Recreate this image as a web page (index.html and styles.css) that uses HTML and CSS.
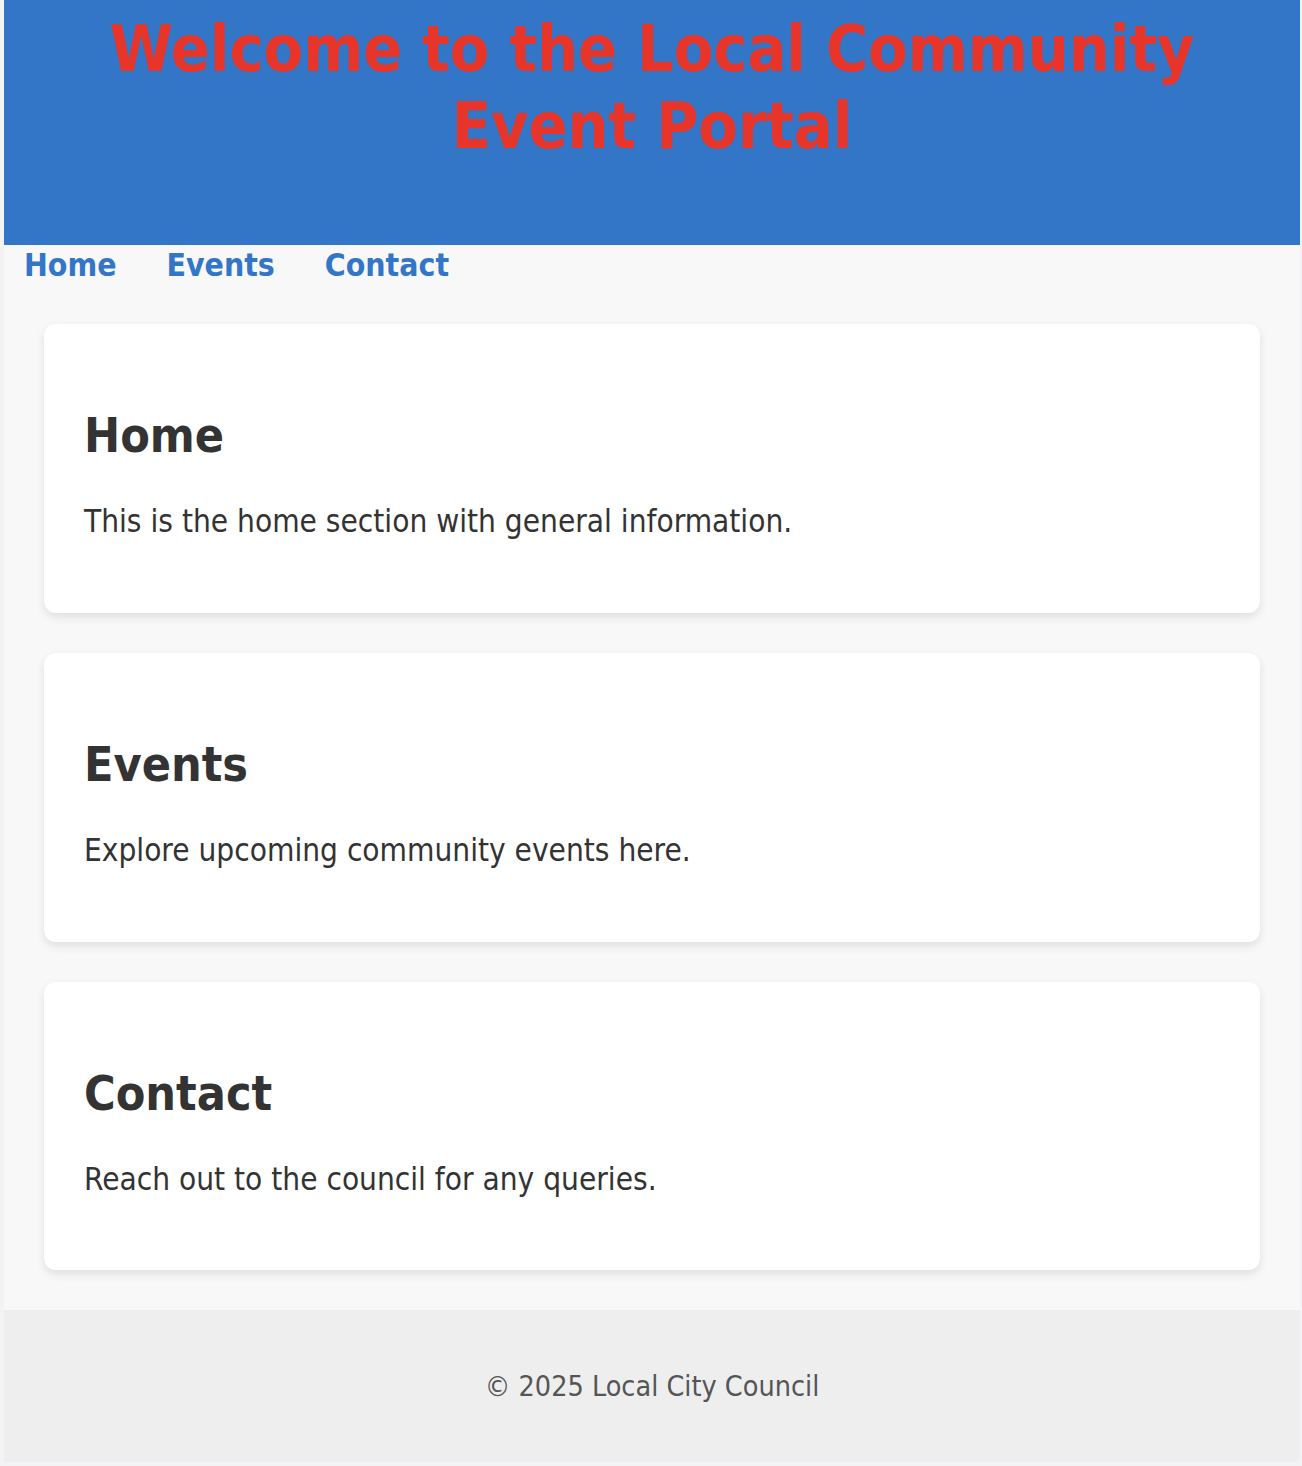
FILE: index.html
```html
<!DOCTYPE html>
<html lang="en">
<head>
<meta charset="utf-8">
<title>Local Community Event Portal</title>
<link rel="stylesheet" href="styles.css">
</head>
<body>
<div class="page">
  <header class="site-header">
    <h1 class="site-title">Welcome to the Local Community Event Portal</h1>
  </header>
  <nav class="site-nav">
    <a class="nav-link" href="#home">Home</a>
    <a class="nav-link" href="#events">Events</a>
    <a class="nav-link" href="#contact">Contact</a>
  </nav>
  <main class="content">
    <section class="card" id="home">
      <h2 class="card-title">Home</h2>
      <p class="card-text">This is the home section with general information.</p>
    </section>
    <section class="card" id="events">
      <h2 class="card-title">Events</h2>
      <p class="card-text">Explore upcoming community events here.</p>
    </section>
    <section class="card" id="contact">
      <h2 class="card-title">Contact</h2>
      <p class="card-text">Reach out to the council for any queries.</p>
    </section>
  </main>
  <footer class="site-footer">
    <p class="footer-text">© 2025 Local City Council</p>
  </footer>
</div>
</body>
</html>
```
FILE: styles.css
```css
html, body {
  margin: 0;
  padding: 0;
}
body {
  background: #f3f3f6;
  font-family: "DejaVu Sans Condensed", "DejaVu Sans", sans-serif;
  font-stretch: condensed;
  color: #333333;
  line-height: 1.207;
  padding: 0 2px 4px 4px;
}
.page {
  background: #f8f8f8;
  border-bottom-right-radius: 6px;
  overflow: hidden;
}
.site-header {
  background: #3375c6;
  padding: 11px 20px 0;
  height: 245px;
  box-sizing: border-box;
}
.site-title {
  margin: 0;
  color: #e8352a;
  font-size: 64px;
  font-weight: bold;
  text-align: center;
}
.site-nav {
  display: flex;
  gap: 50px;
  padding: 1px 20px 0;
}
.nav-link {
  color: #3375c6;
  font-size: 31.7px;
  font-weight: bold;
  text-decoration: none;
}
.content {
  display: flex;
  flex-direction: column;
  gap: 40px;
  padding: 40px 40px 40px;
}
.card {
  background: #ffffff;
  border-radius: 12px;
  box-shadow: 0 4px 10px rgba(0, 0, 0, 0.1);
  padding: 40px;
}
.card-title {
  margin: 43px 0 38px;
  font-size: 48px;
  font-weight: bold;
  color: #333333;
}
.card-text {
  margin: 0 0 32px;
  font-size: 31.3px;
}
.site-footer {
  background: #eeeeee;
  height: 152px;
  display: flex;
  align-items: center;
  justify-content: center;
}
.footer-text {
  margin: 0;
  padding-top: 2px;
  font-size: 28.5px;
  color: #555555;
}
```
